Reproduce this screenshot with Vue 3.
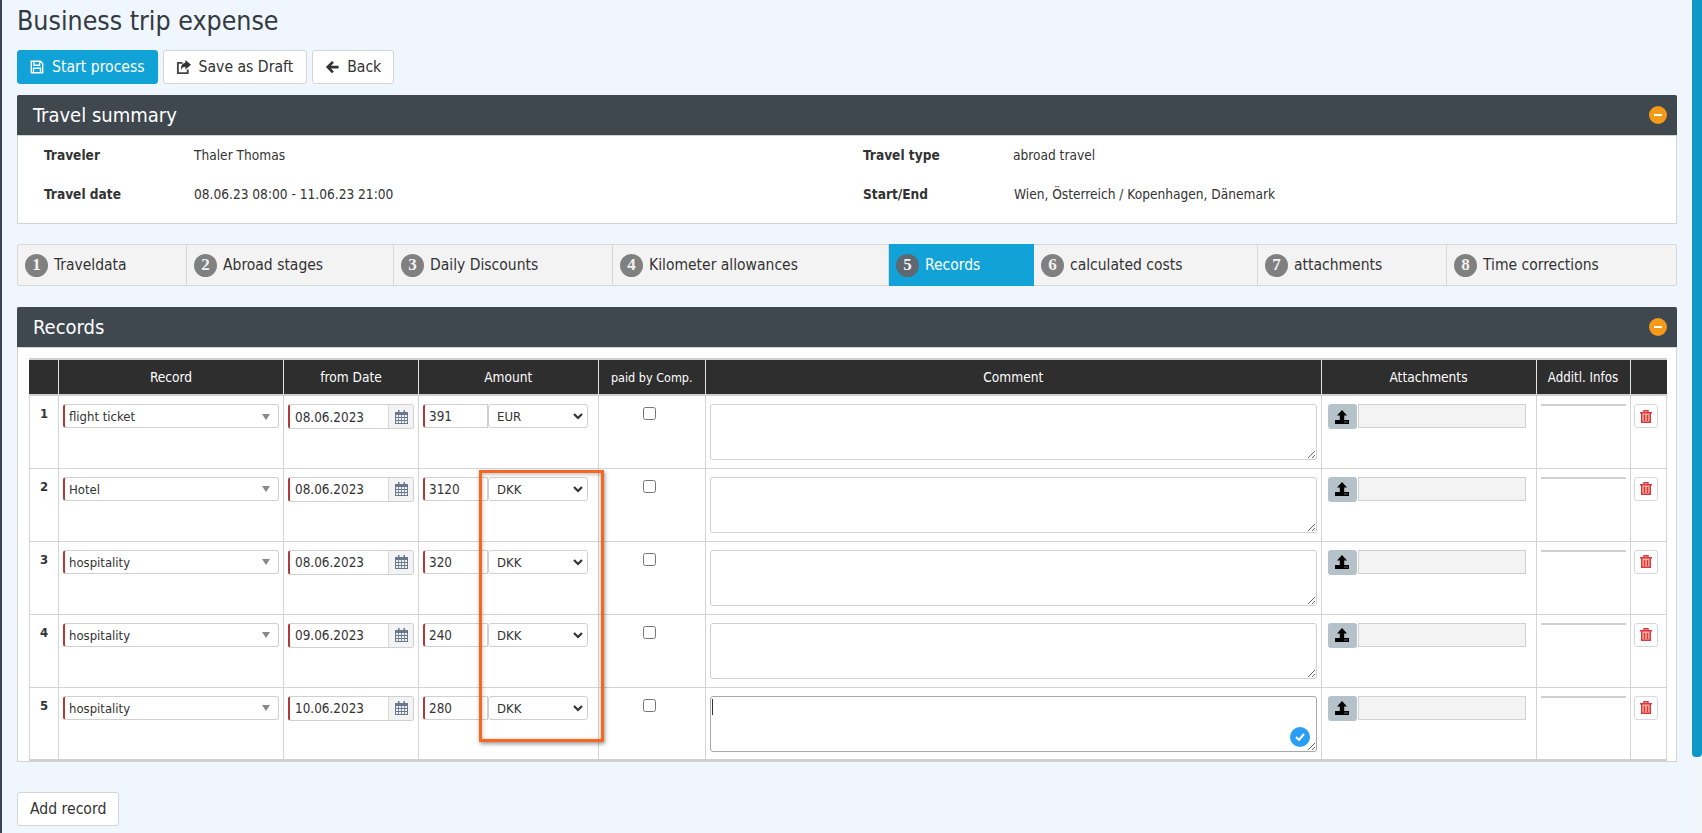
<script setup>
const tabs = ['Traveldata', 'Abroad stages', 'Daily Discounts', 'Kilometer allowances', 'Records', 'calculated costs', 'attachments', 'Time corrections']
const tabWidths = [169, 207, 219, 276, 145, 224, 189, 231]
const rows = [
  { n: 1, rec: 'flight ticket', date: '08.06.2023', amt: '391', cur: 'EUR' },
  { n: 2, rec: 'Hotel', date: '08.06.2023', amt: '3120', cur: 'DKK' },
  { n: 3, rec: 'hospitality', date: '08.06.2023', amt: '320', cur: 'DKK' },
  { n: 4, rec: 'hospitality', date: '09.06.2023', amt: '240', cur: 'DKK' },
  { n: 5, rec: 'hospitality', date: '10.06.2023', amt: '280', cur: 'DKK' }
]
const cols = [29, 225, 135, 179.5, 107.5, 615.5, 215, 94, 36]
</script>

<template>
  <div class="page">
    <h1 class="title">Business trip expense</h1>
    <div class="actions">
      <button class="btn primary">
        <svg class="ic" viewBox="0 0 16 16" width="14" height="14"><path fill="none" stroke="currentColor" stroke-width="1.6" d="M1.500 1.500h10.500l2.500 2.500v10.500h-13zM4.500 1.500v4.500h6.500V1.500M4 14.500V9.500h8v5"/></svg>
        Start process
      </button>
      <button class="btn draft">
        <svg class="ic" viewBox="0 0 16 16" width="15" height="15"><path fill="none" stroke="#444" stroke-width="2" d="M7 3H2v11h10.500v-4"/><path fill="#333" d="M10 0l6 5-6 5V7.200C7.500 7.200 6 8.200 5.500 11 4.800 6.500 7 3.200 10 3z"/></svg>
        Save as Draft
      </button>
      <button class="btn">
        <svg class="ic" viewBox="0 0 16 16" width="14" height="14"><path fill="#333" d="M8 1l2.200 2.200L6.800 6.500H15.500v3.200H6.800l3.400 3.300L8 15.200 1 8z"/></svg>
        Back
      </button>
    </div>

    <section class="panel summary">
      <header class="panel-head">
        <span>Travel summary</span>
        <i class="minus"></i>
      </header>
      <div class="summary-grid">
        <b>Traveler</b><span>Thaler Thomas</span><b>Travel type</b><span>abroad travel</span>
        <b>Travel date</b><span>08.06.23 08:00 - 11.06.23 21:00</span><b>Start/End</b><span class="shift">Wien, Österreich / Kopenhagen, Dänemark</span>
      </div>
    </section>

    <nav class="tabs">
      <div
        v-for="(t, i) in tabs"
        :key="t"
        class="tab"
        :class="{ active: i === 4 }"
        :style="{ width: tabWidths[i] + 'px' }"
      >
        <span class="num">{{ i + 1 }}</span>{{ t }}
      </div>
    </nav>

    <section class="panel records">
      <header class="panel-head">
        <span>Records</span>
        <i class="minus"></i>
      </header>
      <div class="table-wrap">
        <table>
          <colgroup>
            <col v-for="(c, i) in cols" :key="i" :style="{ width: c + 'px' }" />
          </colgroup>
          <thead>
            <tr>
              <th></th><th>Record</th><th>from Date</th><th>Amount</th><th class="small">paid by Comp.</th><th>Comment</th><th>Attachments</th><th class="infos">Additl. Infos</th><th></th>
            </tr>
          </thead>
          <tbody>
            <tr v-for="r in rows" :key="r.n">
              <td class="n">{{ r.n }}</td>
              <td>
                <div class="sel req">
                  <span>{{ r.rec }}</span>
                  <svg width="8" height="6" viewBox="0 0 8 6"><path fill="#888" d="M0 0h8L4 6z"/></svg>
                </div>
              </td>
              <td>
                <div class="date req">
                  <input :value="r.date" />
                  <span class="addon">
                    <svg width="13" height="14" viewBox="0 0 13 14"><path fill="#68788a" d="M3 0h1.500v2H3zM8.500 0H10v2H8.500zM0 2h13v12H0z"/><path fill="#eef0f2" d="M1 5h2.200v2H1zM4 5h2.200v2H4zM7 5h2.200v2H7zM10 5h2v2h-2zM1 8h2.200v2H1zM4 8h2.200v2H4zM7 8h2.200v2H7zM10 8h2v2h-2zM1 11h2.200v2H1zM4 11h2.200v2H4zM7 11h2.200v2H7zM10 11h2v2h-2z"/></svg>
                  </span>
                </div>
              </td>
              <td>
                <div class="amount">
                  <input class="amt" :value="r.amt" />
                  <div class="sel cur">
                    <span>{{ r.cur }}</span>
                    <svg width="10" height="7" viewBox="0 0 10 7"><path fill="none" stroke="#333" stroke-width="2.200" d="M1 1l4 4 4-4"/></svg>
                  </div>
                </div>
              </td>
              <td class="center"><input type="checkbox" class="check" /></td>
              <td>
                <div class="comment" :class="{ focus: r.n === 5 }">
                  <textarea></textarea>
                  <span v-if="r.n === 5" class="caret"></span>
                  <span v-if="r.n === 5" class="gram">
                    <svg width="10" height="8" viewBox="0 0 10 8"><path fill="none" stroke="#fff" stroke-width="2" d="M1 4l3 3 5-6"/></svg>
                  </span>
                </div>
              </td>
              <td>
                <div class="attach">
                  <span class="up">
                    <svg width="14" height="14" viewBox="0 0 14 14"><path fill="#000" d="M7 0l5 5.500H9.200v5H4.800v-5H2zM0 10h14v4H0z"/><path fill="#b6c2c9" d="M9.500 11.500h1v1h-1zM11.500 11.500h1v1h-1z"/></svg>
                  </span>
                  <span class="file"></span>
                </div>
              </td>
              <td><div class="line"></div></td>
              <td class="del">
                <span class="trash">
                  <svg width="12" height="13" viewBox="0 0 12 13"><path fill="#f0b090" d="M2 3h8v9.500H2z"/><path fill="none" stroke="#dc3545" stroke-width="1.400" d="M0 2.700h12M4 2.500V.8h4v1.700M1.700 3v9.300h8.600V3M4.500 5v6M7.500 5v6"/></svg>
                </span>
              </td>
            </tr>
          </tbody>
        </table>
      </div>
    </section>

    <button class="btn add">Add record</button>

    <div class="marker"></div>
    <div class="scroll"><div class="thumb"></div></div>
  </div>
</template>

<style>
html, body {
  margin: 0;
  height: 100%;
  overflow: hidden;
  background: #eff6fd;
}
</style>

<style scoped>
.page {
  position: relative;
  box-sizing: border-box;
  height: 833px;
  padding: 0 25px 0 15px;
  border-left: 2px solid #3a4450;
  font-family: "DejaVu Sans", sans-serif;
  font-stretch: condensed;
  color: #333;
  font-size: 13px;
}
.title {
  margin: 0;
  height: 42px;
  line-height: 42px;
  font-size: 26.500px;
  font-weight: 400;
  color: #333a42;
}
.actions {
  display: flex;
  gap: 5px;
  margin-top: 8px;
}
.btn {
  display: inline-flex;
  align-items: center;
  gap: 8px;
  height: 34px;
  box-sizing: border-box;
  padding: 0 12px;
  border: 1px solid #d5d5d5;
  border-radius: 3px;
  background: #fff;
  color: #333;
  font: inherit;
  font-stretch: condensed;
  font-size: 15.600px;
}
.btn.draft {
  padding-right: 13px;
}
.btn.primary {
  background: #11a2d8;
  border-color: #11a2d8;
  color: #fff;
}
.panel {
  background: #fff;
  border: 1px solid #d4d4d4;
  box-sizing: border-box;
  width: 1660px;
}
.panel-head {
  display: flex;
  align-items: center;
  justify-content: space-between;
  height: 40px;
  padding: 0 10px 0 16px;
  background: #3f474f;
  color: #fff;
  font-size: 20px;
  border-bottom: 1px solid #d4d4d4;
  margin: -1px -1px 0;
  border-radius: 2px 2px 0 0;
}
.minus {
  position: relative;
  width: 18px;
  height: 18px;
  border-radius: 50%;
  background: #f49a18;
}
.minus::after {
  content: "";
  position: absolute;
  left: 5px;
  right: 5px;
  top: 8px;
  height: 1.500px;
  background: #fff;
}
.summary {
  margin-top: 11px;
  height: 129px;
}
.summary-grid {
  display: grid;
  grid-template-columns: 150px 669px 150px 1fr;
  grid-auto-rows: 39px;
  align-items: center;
  margin-top: -1px;
  padding-left: 26px;
  font-size: 13.600px;
}
.shift {
  padding-left: 1px;
}
.tabs {
  display: flex;
  margin-top: 20px;
  height: 42px;
  box-sizing: border-box;
  border: 1px solid #d8d8d8;
  border-radius: 2px;
  background: #f3f3f3;
  width: 1660px;
}
.tab {
  display: flex;
  align-items: center;
  box-sizing: border-box;
  padding-left: 7px;
  border-right: 1px solid #d8d8d8;
  font-size: 15.500px;
  color: #333;
}
.tab:last-child {
  border-right: 0;
  flex: 1;
}
.tab.active {
  background: #11a2d8;
  color: #fff;
  margin: -1px 0;
  border-right: 0;
}
.num {
  display: inline-flex;
  align-items: center;
  justify-content: center;
  width: 23px;
  height: 23px;
  border-radius: 50%;
  margin-right: 6px;
  background: #808080;
  color: #f2f2f2;
  font-family: "Liberation Serif", serif;
  font-weight: 700;
  font-size: 17px;
}
.active .num {
  background: #5f6770;
}
.records {
  margin-top: 21px;
  height: 455px;
}
.table-wrap {
  padding: 10px 11px 0;
}
table {
  border-collapse: collapse;
  table-layout: fixed;
  width: 1637px;
  border-bottom: 2px solid #d0d0d0;
}
th {
  height: 34px;
  padding: 0;
  background: #2e2e2e;
  border-top: 2px solid #d0d0d0;
  border-bottom: 2px solid #d0d0d0;
  border-left: 1px solid #e4e4e4;
  border-right: 1px solid #e4e4e4;
  color: #fff;
  font-weight: 400;
  font-size: 13.600px;
  box-sizing: content-box;
}
th.small {
  font-size: 12.500px;
}
th.infos {
  font-size: 13.200px;
}
th:first-child {
  border-left-color: #2e2e2e;
}
th:last-child {
  border-right-color: #2e2e2e;
}
td {
  height: 73px;
  box-sizing: border-box;
  padding: 8px 4px 0 4px;
  vertical-align: top;
  border: 1px solid #d4d4d4;
  font-size: 13px;
}
td.n {
  text-align: center;
  font-weight: 700;
  padding: 9px 0 0;
  line-height: 18px;
  color: #333;
}
td.center {
  text-align: center;
  padding: 9px 8px 0 4px;
}
td.del {
  padding-left: 3px;
}
.sel {
  display: flex;
  align-items: center;
  justify-content: space-between;
  height: 24px;
  box-sizing: border-box;
  padding: 1px 8px 0 4px;
  border: 1px solid #d0d0d0;
  border-radius: 3px;
  background: #fff;
  color: #333;
}
.sel.req {
  border-left: 2px solid #b03a3a;
}
.date {
  display: flex;
  height: 25px;
  width: 126px;
  box-sizing: border-box;
  border: 1px solid #d0d0d0;
  border-radius: 3px;
  overflow: hidden;
}
.date.req {
  border-left: 2px solid #b03a3a;
}
.date input {
  flex: 1;
  min-width: 0;
  border: 0;
  outline: 0;
  padding: 1px 0 0 5px;
  font: inherit;
  font-stretch: condensed;
  font-size: 13.400px;
  color: #333;
}
.addon {
  display: flex;
  align-items: center;
  justify-content: center;
  width: 24px;
  background: #f3f3f3;
  border-left: 1px solid #d8d8d8;
}
.amount {
  display: flex;
}
.amt {
  width: 65px;
  height: 24px;
  box-sizing: border-box;
  padding: 1px 0 0 4px;
  border: 1px solid #d0d0d0;
  border-left: 2px solid #b03a3a;
  border-radius: 3px 0 0 3px;
  outline: 0;
  font: inherit;
  font-stretch: condensed;
  font-size: 13.400px;
  color: #333;
}
.cur {
  width: 100px;
  padding: 1px 4px 0 8px;
}
.check {
  margin: 2px 0 0;
  width: 13px;
  height: 13px;
}
.comment {
  position: relative;
  height: 56px;
}
.comment textarea {
  display: block;
  width: 100%;
  height: 100%;
  box-sizing: border-box;
  border: 1px solid #d0d0d0;
  border-radius: 3px;
  outline: 0;
  padding: 0;
  background: #fff;
}
.focus textarea {
  border-color: #a8a8a8;
}
.caret {
  position: absolute;
  left: 2px;
  top: 3px;
  width: 1px;
  height: 16px;
  background: #333;
}
.gram {
  position: absolute;
  right: 7px;
  bottom: 5px;
  width: 20px;
  height: 20px;
  display: flex;
  align-items: center;
  justify-content: center;
  border-radius: 50%;
  background: #2a9df4;
}
.attach {
  display: flex;
  gap: 1px;
  padding-left: 2px;
}
.up {
  display: flex;
  align-items: center;
  justify-content: center;
  width: 29px;
  height: 25px;
  border-radius: 3px;
  background: #b6c2c9;
}
.file {
  width: 168px;
  height: 24px;
  box-sizing: border-box;
  border: 1px solid #d0d0d0;
  background: #f3f3f3;
}
.line {
  height: 2px;
  background: #d0d0d0;
}
.trash {
  display: flex;
  align-items: center;
  justify-content: center;
  width: 24px;
  height: 24px;
  box-sizing: border-box;
  border: 1px solid #d8d8d8;
  border-radius: 3px;
}
.add {
  margin-top: 30px;
}
.marker {
  position: absolute;
  left: 476.500px;
  top: 470px;
  width: 125px;
  height: 272px;
  box-sizing: border-box;
  border: 3px solid #f9661f;
  box-shadow: 1px 2px 4px rgba(0, 0, 0, 0.4), inset 0 1px 4px rgba(0, 0, 0, 0.3);
}
.scroll {
  position: absolute;
  right: 0;
  top: 0;
  width: 10px;
  height: 833px;
  background: #f1f6fc;
}
.thumb {
  height: 757px;
  background: #0e97c9;
  border-radius: 0 0 4px 4px;
}
</style>
